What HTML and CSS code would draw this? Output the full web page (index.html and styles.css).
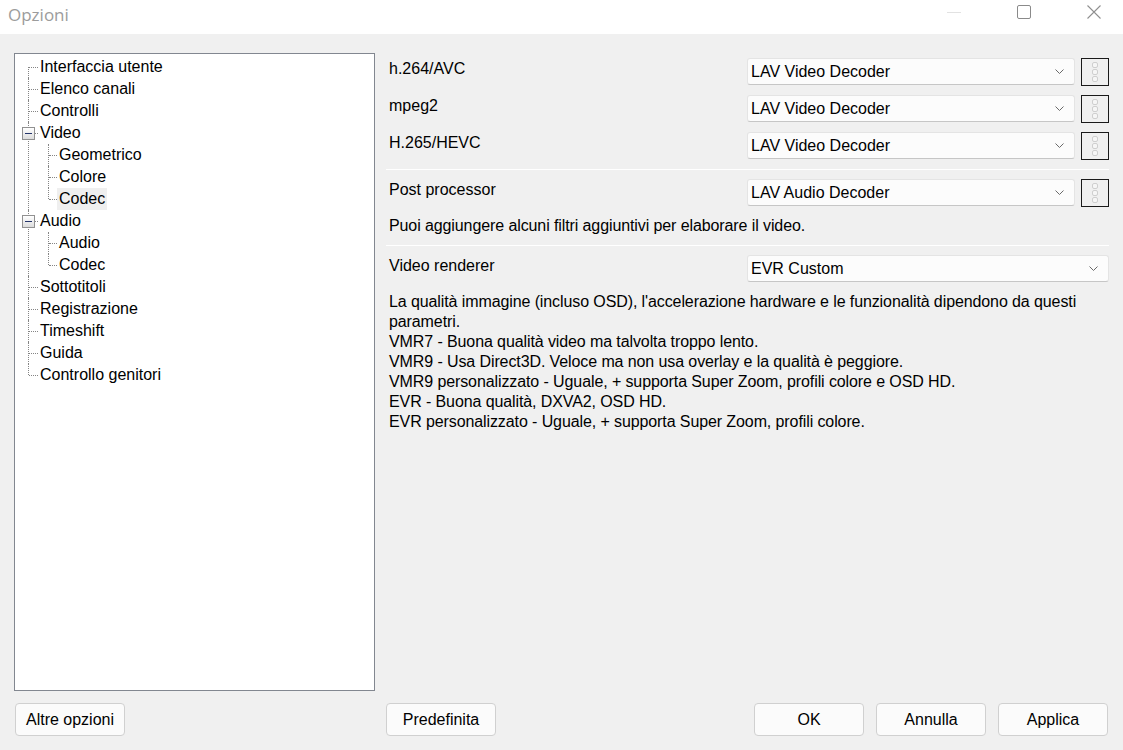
FILE: index.html
```html
<!DOCTYPE html>
<html lang="it">
<head>
    <meta charset="UTF-8">
    <title>Opzioni</title>
    <link rel="stylesheet" href="styles.css">
</head>
<body>
    <div class="window">
        <div class="titlebar">
            <span class="title">Opzioni</span>
            <div class="caption">
                <svg class="cap-icon" width="14" height="14" viewBox="0 0 14 14"><line x1="0" y1="7.5" x2="14" y2="7.5" stroke="#e2e2e2" stroke-width="1"/></svg>
                <svg class="cap-icon" width="14" height="14" viewBox="0 0 14 14"><rect x="0.5" y="0.5" width="13" height="13" rx="1.5" fill="none" stroke="#8a8a8a" stroke-width="1"/></svg>
                <svg class="cap-icon" width="14" height="14" viewBox="0 0 14 14"><path d="M0.5 0.5 L13.5 13.5 M13.5 0.5 L0.5 13.5" stroke="#8f8f8f" stroke-width="1.1" fill="none"/></svg>
            </div>
        </div>

        <div class="content">
            <div class="tree-box">
                <ul class="tree">
                    <li><span class="node">Interfaccia utente</span></li>
                    <li><span class="node">Elenco canali</span></li>
                    <li><span class="node">Controlli</span></li>
                    <li><span class="toggle"></span><span class="node">Video</span>
                        <ul>
                            <li><span class="node">Geometrico</span></li>
                            <li><span class="node">Colore</span></li>
                            <li><span class="node selected">Codec</span></li>
                        </ul>
                    </li>
                    <li><span class="toggle"></span><span class="node">Audio</span>
                        <ul>
                            <li><span class="node">Audio</span></li>
                            <li><span class="node">Codec</span></li>
                        </ul>
                    </li>
                    <li><span class="node">Sottotitoli</span></li>
                    <li><span class="node">Registrazione</span></li>
                    <li><span class="node">Timeshift</span></li>
                    <li><span class="node">Guida</span></li>
                    <li><span class="node">Controllo genitori</span></li>
                </ul>
            </div>

            <div class="panel">
                <div class="setting-row">
                    <span class="setting-label">h.264/AVC</span>
                    <div class="combo"><span>LAV Video Decoder</span><svg width="9" height="5" viewBox="0 0 9 5"><polyline points="0.5,0.5 4.5,4.5 8.5,0.5" fill="none" stroke="#6a6a6a" stroke-width="1"/></svg></div>
                    <button class="prop-btn"><svg width="8" height="22" viewBox="0 0 8 22"><rect x="1.5" y="1.5" width="5" height="5" rx="1.5" fill="#f6f6f6" stroke="#cfcfcf"/><rect x="1.5" y="8.5" width="5" height="5" rx="1.5" fill="#f6f6f6" stroke="#cfcfcf"/><rect x="1.5" y="15.5" width="5" height="5" rx="1.5" fill="#f6f6f6" stroke="#cfcfcf"/></svg></button>
                </div>
                <div class="setting-row">
                    <span class="setting-label">mpeg2</span>
                    <div class="combo"><span>LAV Video Decoder</span><svg width="9" height="5" viewBox="0 0 9 5"><polyline points="0.5,0.5 4.5,4.5 8.5,0.5" fill="none" stroke="#6a6a6a" stroke-width="1"/></svg></div>
                    <button class="prop-btn"><svg width="8" height="22" viewBox="0 0 8 22"><rect x="1.5" y="1.5" width="5" height="5" rx="1.5" fill="#f6f6f6" stroke="#cfcfcf"/><rect x="1.5" y="8.5" width="5" height="5" rx="1.5" fill="#f6f6f6" stroke="#cfcfcf"/><rect x="1.5" y="15.5" width="5" height="5" rx="1.5" fill="#f6f6f6" stroke="#cfcfcf"/></svg></button>
                </div>
                <div class="setting-row">
                    <span class="setting-label">H.265/HEVC</span>
                    <div class="combo"><span>LAV Video Decoder</span><svg width="9" height="5" viewBox="0 0 9 5"><polyline points="0.5,0.5 4.5,4.5 8.5,0.5" fill="none" stroke="#6a6a6a" stroke-width="1"/></svg></div>
                    <button class="prop-btn"><svg width="8" height="22" viewBox="0 0 8 22"><rect x="1.5" y="1.5" width="5" height="5" rx="1.5" fill="#f6f6f6" stroke="#cfcfcf"/><rect x="1.5" y="8.5" width="5" height="5" rx="1.5" fill="#f6f6f6" stroke="#cfcfcf"/><rect x="1.5" y="15.5" width="5" height="5" rx="1.5" fill="#f6f6f6" stroke="#cfcfcf"/></svg></button>
                </div>

                <div class="separator"></div>

                <div class="setting-row">
                    <span class="setting-label">Post processor</span>
                    <div class="combo"><span>LAV Audio Decoder</span><svg width="9" height="5" viewBox="0 0 9 5"><polyline points="0.5,0.5 4.5,4.5 8.5,0.5" fill="none" stroke="#6a6a6a" stroke-width="1"/></svg></div>
                    <button class="prop-btn"><svg width="8" height="22" viewBox="0 0 8 22"><rect x="1.5" y="1.5" width="5" height="5" rx="1.5" fill="#f6f6f6" stroke="#cfcfcf"/><rect x="1.5" y="8.5" width="5" height="5" rx="1.5" fill="#f6f6f6" stroke="#cfcfcf"/><rect x="1.5" y="15.5" width="5" height="5" rx="1.5" fill="#f6f6f6" stroke="#cfcfcf"/></svg></button>
                </div>
                <p class="hint">Puoi aggiungere alcuni filtri aggiuntivi per elaborare il video.</p>

                <div class="separator"></div>

                <div class="setting-row">
                    <span class="setting-label">Video renderer</span>
                    <div class="combo wide"><span>EVR Custom</span><svg width="9" height="5" viewBox="0 0 9 5"><polyline points="0.5,0.5 4.5,4.5 8.5,0.5" fill="none" stroke="#6a6a6a" stroke-width="1"/></svg></div>
                </div>
                <p class="description">La qualità immagine (incluso OSD), l'accelerazione hardware e le funzionalità dipendono da questi parametri.<br>
                VMR7 - Buona qualità video ma talvolta troppo lento.<br>
                VMR9 - Usa Direct3D. Veloce ma non usa overlay e la qualità è peggiore.<br>
                VMR9 personalizzato - Uguale, + supporta Super Zoom, profili colore e OSD HD.<br>
                EVR - Buona qualità, DXVA2, OSD HD.<br>
                EVR personalizzato - Uguale, + supporta Super Zoom, profili colore.</p>
            </div>
        </div>

        <div class="footer">
            <div class="footer-left">
                <button class="btn">Altre opzioni</button>
            </div>
            <div class="footer-right">
                <button class="btn">Predefinita</button>
                <div class="dialog-buttons">
                    <button class="btn">OK</button>
                    <button class="btn">Annulla</button>
                    <button class="btn">Applica</button>
                </div>
            </div>
        </div>
    </div>
</body>
</html>
```

FILE: styles.css
```css
body {
    margin: 0;
    background-color: #f0f0f0;
    font-family: 'Liberation Sans', Arial, sans-serif;
    font-size: 16px;
    color: #000;
}
.window {
    width: 1123px;
    height: 750px;
    overflow: hidden;
}
.titlebar {
    height: 34px;
    background-color: #fff;
    display: flex;
    justify-content: space-between;
    align-items: flex-start;
}
.title {
    font-family: 'Open Sans', 'Noto Sans', sans-serif;
    font-size: 17px;
    color: #9c9c9c;
    margin-left: 8px;
    margin-top: 3px;
}
.caption {
    display: flex;
    gap: 56px;
    padding-top: 5px;
    padding-right: 22px;
}
.cap-icon {
    display: block;
}
.content {
    display: grid;
    grid-template-columns: 361px 1fr;
    column-gap: 11px;
    padding: 19px 14px 0 14px;
}
.tree-box {
    height: 638px;
    box-sizing: border-box;
    border: 1px solid #828790;
    background-color: #fff;
    padding-top: 2px;
}
.tree, .tree ul {
    list-style: none;
    margin: 0;
    padding: 0;
}
.tree li {
    position: relative;
    padding-left: 23px;
}
.tree ul li {
    padding-left: 19px;
}
.node {
    display: block;
    width: max-content;
    height: 22px;
    line-height: 22px;
    padding: 0 2px;
}
.node.selected {
    background-color: #efefef;
}
/* tree connector lines */
.tree li::before {
    content: "";
    position: absolute;
    left: 13px;
    top: 0;
    bottom: 0;
    border-left: 1px dotted #858585;
}
.tree li::after {
    content: "";
    position: absolute;
    left: 14px;
    top: 11px;
    width: 9px;
    border-top: 1px dotted #858585;
}
.tree ul li::before {
    left: 10px;
}
.tree ul li::after {
    left: 11px;
    width: 8px;
}
.tree > li:first-child::before {
    top: 11px;
}
.tree li:last-child::before {
    bottom: auto;
    height: 11px;
}
.toggle {
    position: absolute;
    left: 7px;
    top: 5px;
    width: 13px;
    height: 13px;
    box-sizing: border-box;
    border: 1px solid #919191;
    background: linear-gradient(#ffffff, #dcdcdc);
    z-index: 1;
}
.toggle::before {
    content: "";
    position: absolute;
    left: 2px;
    right: 2px;
    top: 5px;
    height: 1px;
    background-color: #25356b;
}
.panel {
    padding-top: 5px;
}
.setting-row {
    display: flex;
    align-items: flex-start;
    height: 28px;
    margin-bottom: 9px;
}
.setting-label {
    width: 358px;
    padding: 1px 0 0 3px;
    line-height: 20px;
    flex-shrink: 0;
}
.combo {
    width: 328px;
    height: 27px;
    box-sizing: border-box;
    display: flex;
    align-items: center;
    justify-content: space-between;
    padding: 0 10px 0 3px;
    background-color: #fcfcfc;
    border: 1px solid #e4e4e4;
    border-bottom-color: #c6c6c6;
    border-radius: 3px;
}
.combo svg {
    display: block;
}
.combo.wide {
    flex: 1;
}
.prop-btn {
    width: 28px;
    height: 28px;
    margin-left: 6px;
    padding: 0;
    border: 1px solid #1a1a1a;
    background-color: #f0f0f0;
    display: flex;
    align-items: center;
    justify-content: center;
}
.prop-btn svg {
    display: block;
}
.separator {
    height: 1px;
    background-color: #fff;
    margin-bottom: 9px;
}
.hint, .description {
    margin: 0 0 9px 0;
    padding-left: 3px;
    line-height: 20px;
    letter-spacing: -0.1px;
}
.footer {
    display: grid;
    grid-template-columns: 361px 1fr;
    column-gap: 11px;
    padding: 12px 14px 0 14px;
}
.footer-left {
    padding-left: 1px;
}
.footer-right {
    display: flex;
    justify-content: space-between;
}
.dialog-buttons {
    display: flex;
    gap: 12px;
    padding-right: 1px;
}
.btn {
    width: 110px;
    height: 33px;
    box-sizing: border-box;
    border: 1px solid #d0d0d0;
    border-radius: 4px;
    background-color: #fbfbfb;
    font-family: 'Liberation Sans', Arial, sans-serif;
    font-size: 16px;
    color: #000;
    padding: 0;
}
```
